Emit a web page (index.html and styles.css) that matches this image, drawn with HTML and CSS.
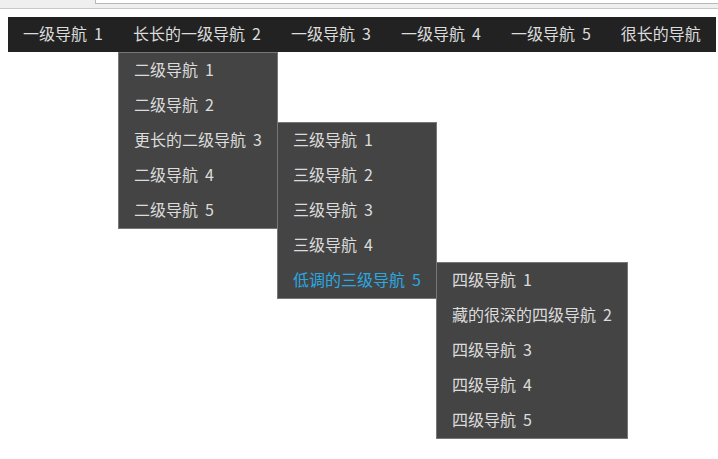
FILE: index.html
```html
<!DOCTYPE html>
<html lang="zh-CN">
<head>
<meta charset="utf-8">
<title>多级导航</title>
<link rel="stylesheet" href="styles.css">
</head>
<body>
<div class="chrome"><div class="address"></div></div>
<div class="page">
  <nav class="nav">
    <ul class="nav-list">
      <li class="nav-item"><a class="nav-link" href="#">一级导航 1</a></li>
      <li class="nav-item"><a class="nav-link" href="#">长长的一级导航 2</a>
        <ul class="sub">
          <li class="sub-item"><a class="sub-link" href="#">二级导航 1</a></li>
          <li class="sub-item"><a class="sub-link" href="#">二级导航 2</a></li>
          <li class="sub-item"><a class="sub-link" href="#">更长的二级导航 3</a>
            <ul class="sub sub-side">
              <li class="sub-item"><a class="sub-link" href="#">三级导航 1</a></li>
              <li class="sub-item"><a class="sub-link" href="#">三级导航 2</a></li>
              <li class="sub-item"><a class="sub-link" href="#">三级导航 3</a></li>
              <li class="sub-item"><a class="sub-link" href="#">三级导航 4</a></li>
              <li class="sub-item"><a class="sub-link is-muted" href="#">低调的三级导航 5</a>
                <ul class="sub sub-side">
                  <li class="sub-item"><a class="sub-link" href="#">四级导航 1</a></li>
                  <li class="sub-item"><a class="sub-link" href="#">藏的很深的四级导航 2</a></li>
                  <li class="sub-item"><a class="sub-link" href="#">四级导航 3</a></li>
                  <li class="sub-item"><a class="sub-link" href="#">四级导航 4</a></li>
                  <li class="sub-item"><a class="sub-link" href="#">四级导航 5</a></li>
                </ul>
              </li>
            </ul>
          </li>
          <li class="sub-item"><a class="sub-link" href="#">二级导航 4</a></li>
          <li class="sub-item"><a class="sub-link" href="#">二级导航 5</a></li>
        </ul>
      </li>
      <li class="nav-item"><a class="nav-link" href="#">一级导航 3</a></li>
      <li class="nav-item"><a class="nav-link" href="#">一级导航 4</a></li>
      <li class="nav-item"><a class="nav-link" href="#">一级导航 5</a></li>
      <li class="nav-item"><a class="nav-link" href="#">很长的导航</a></li>
    </ul>
  </nav>
</div>
</body>
</html>
```

FILE: styles.css
```css
* {
  box-sizing: border-box;
}

html,
body {
  margin: 0;
  padding: 0;
  background: #ffffff;
}

body {
  min-height: 459px;
  font-family: "Noto Sans CJK SC", "Noto Sans", sans-serif;
  font-size: 16px;
}

.chrome {
  height: 9px;
  background: #efefef;
  border-bottom: 1px solid #c8c8c8;
  padding-left: 95px;
}

.address {
  height: 4px;
  background: #ffffff;
  border: 1px solid #b8b8b8;
  border-top: 0;
  border-right: 0;
}

.page {
  padding: 8px 0 0 8px;
  min-height: 449px;
}

ul {
  list-style: none;
  margin: 0;
  padding: 0;
}

.nav {
  display: block;
}

.nav-list {
  display: inline-flex;
  background: #222222;
}

.nav-item {
  position: relative;
}

.nav-link,
.sub-link {
  display: block;
  padding: 0 15px 2px;
  line-height: 33px;
  height: 35px;
  color: #dcdcdc;
  text-decoration: none;
  white-space: nowrap;
  word-spacing: 3.5px;
}

.sub {
  display: block;
  position: absolute;
  top: 100%;
  left: 0;
  min-width: 100%;
  background: #444444;
  border: 1px solid #777777;
  z-index: 10;
}

.sub-item {
  position: relative;
}

.sub-side {
  top: -1px;
  left: 100%;
  min-width: 0;
}

.sub-link.is-muted {
  color: #2aa8e0;
}
```
